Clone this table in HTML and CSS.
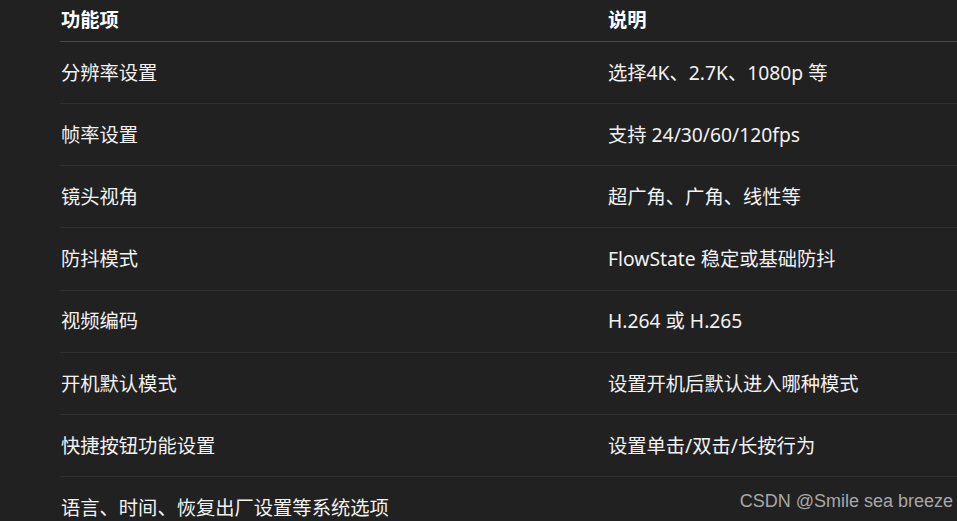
FILE: index.html
```html
<!DOCTYPE html>
<html lang="zh-CN">
<head>
<meta charset="utf-8">
<link rel="stylesheet" href="styles.css">
</head>
<body>
<div class="page">
  <div class="table">
    <div class="row head">
      <div class="cell c1">功能项</div>
      <div class="cell c2">说明</div>
    </div>
    <div class="row">
      <div class="cell c1">分辨率设置</div>
      <div class="cell c2">选择4K、2.7K、1080p 等</div>
    </div>
    <div class="row">
      <div class="cell c1">帧率设置</div>
      <div class="cell c2">支持 24/30/60/120fps</div>
    </div>
    <div class="row">
      <div class="cell c1">镜头视角</div>
      <div class="cell c2">超广角、广角、线性等</div>
    </div>
    <div class="row">
      <div class="cell c1">防抖模式</div>
      <div class="cell c2">FlowState 稳定或基础防抖</div>
    </div>
    <div class="row">
      <div class="cell c1">视频编码</div>
      <div class="cell c2">H.264 或 H.265</div>
    </div>
    <div class="row">
      <div class="cell c1">开机默认模式</div>
      <div class="cell c2">设置开机后默认进入哪种模式</div>
    </div>
    <div class="row">
      <div class="cell c1">快捷按钮功能设置</div>
      <div class="cell c2">设置单击/双击/长按行为</div>
    </div>
    <div class="row last">
      <div class="cell c1">语言、时间、恢复出厂设置等系统选项</div>
      <div class="cell c2"></div>
    </div>
  </div>
  <div class="watermark">CSDN @Smile sea breeze</div>
</div>
</body>
</html>
```

FILE: styles.css
```css
html, body {
  margin: 0;
  padding: 0;
  background: #212121;
  overflow: hidden;
}
.page {
  position: relative;
  width: 957px;
  height: 521px;
  overflow: hidden;
  padding-left: 60px;
  box-sizing: border-box;
}
.table {
  width: 1200px;
  display: flex;
  flex-direction: column;
  font-family: "Noto Sans", "Noto Sans CJK SC", sans-serif;
  font-size: 19.3px;
  color: #f2f2f2;
}
.row {
  display: grid;
  grid-template-columns: 548px 1fr;
  height: 62.14px;
  box-sizing: border-box;
  flex: none;
  align-items: center;
  border-bottom: 1px solid #303030;
}
.row.head {
  height: 42px;
  margin-top: 0;
  padding-bottom: 1px;
  border-bottom: 1px solid #4a4a4a;
  font-weight: bold;
  color: #ffffff;
}
.cell {
  padding-left: 0;
  white-space: nowrap;
  line-height: 1.2;
}
.c1 {
  padding-left: 1px;
}
.watermark {
  position: absolute;
  right: 4px;
  bottom: 9px;
  font-family: "Liberation Sans", Arial, sans-serif;
  font-size: 18px;
  color: #a8a8a8;
}
```
